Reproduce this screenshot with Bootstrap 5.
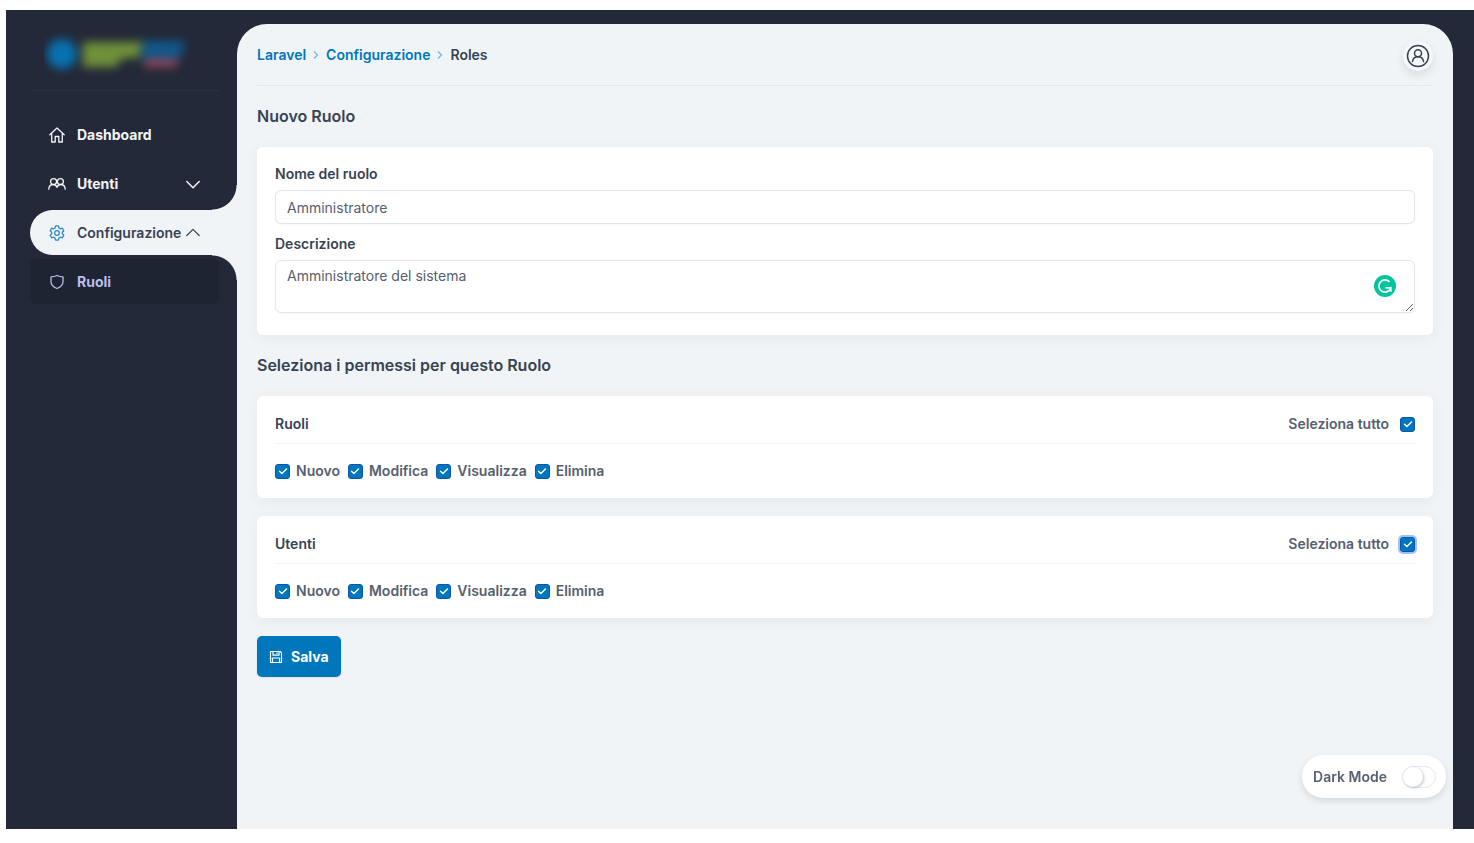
<!DOCTYPE html>
<html lang="it">
<head>
<meta charset="utf-8">
<meta name="viewport" content="width=device-width, initial-scale=1">
<title>Nuovo Ruolo</title>
<link href="https://cdn.jsdelivr.net/npm/bootstrap@5.3.0/dist/css/bootstrap.min.css" rel="stylesheet">
<style>
  :root { --night: #232938; --page: #f0f4f7; --brand: #0077bd; --ink: #374353; --soft: #56606f; }
  body { font-family: Inter, "Liberation Sans", sans-serif; font-size: 14px; line-height: 18px; color: var(--ink); background: #fff; padding: 10px 0 14px 6px; }
  .shell { background: var(--night); min-height: calc(100vh - 24px); padding-right: 21px; }
  .side { width: 231px; padding: 20px 0 20px 24px; }
  .logo { height: 51px; padding: 0 0 0 14px; }
  .side-rule { height: 1px; background: #2a3145; margin: 9px 18px 21px 0; }
  .side-nav { gap: 4px; }
  .side-link { height: 45px; padding: 0 18px; margin-right: 18px; color: #f1f4f8; font-weight: 700; border-radius: 6px; text-decoration: none; display: flex; align-items: center; }
  .side-link .ico { width: 18px; height: 18px; margin-right: 11px; flex: none; }
  .side-link .chev { width: 16px; height: 16px; margin-left: auto; flex: none; }
  .side-link.current { position: relative; margin-right: 0; padding-right: 36px; background: var(--page); color: var(--ink); font-weight: 600; border-radius: 23px 0 0 23px; }
  .side-link.current::before, .side-link.current::after { content: ""; position: absolute; right: 0; width: 25px; height: 25px; pointer-events: none; }
  .side-link.current::before { bottom: 100%; background: radial-gradient(circle at 0 0, transparent 24px, var(--page) 25px); }
  .side-link.current::after { top: 100%; background: radial-gradient(circle at 0 100%, transparent 24px, var(--page) 25px); }
  .side-link.child { background: #1e2431; color: #b8bff0; }
  .stage { margin-top: 14px; padding: 0 20px 24px; background: var(--page); border-radius: 30px 30px 0 0; }
  .topbar { height: 62px; border-bottom: 1px solid #e4e8ec; }
  .breadcrumb { --bs-breadcrumb-divider: ""; font-weight: 600; gap: 6px; }
  .breadcrumb a { color: var(--brand); text-decoration: none; }
  .avatar { width: 30px; height: 30px; padding: 3px; margin-top: 3px; border: 0; border-radius: 50%; background: #f5f7f9; color: var(--ink); box-shadow: 0 4px 8px rgba(40,55,75,.12); }
  h1, h2.section-title { font-size: 16px; line-height: 20px; font-weight: 600; margin: 0; }
  h1 { padding: 20px 0 21px; }
  h2.section-title { padding: 20px 0 21px; }
  .panel { background: #fff; border-radius: 6px; padding: 18px; box-shadow: 0 3px 14px rgba(50,70,100,.06); }
  .panel .form-label { font-weight: 600; margin: 0 0 7px; display: block; }
  .panel .form-control + .form-label { margin-top: 11px; }
  .form-control { font-size: 14px; line-height: 18px; padding: 6px 11px; border-color: #e1e7ef; border-radius: 6px; color: var(--soft); height: 34px; box-shadow: 0 1px 2px rgba(0,0,0,.03); }
  textarea.form-control { height: 53px; min-height: 53px; resize: vertical; }
  .helper { position: absolute; right: 19px; top: 15px; width: 22px; height: 22px; }
  .perms { gap: 18px; }
  .perm-head { border-bottom: 1px solid #f0f2f5; padding-bottom: 9px; line-height: 20px; margin-bottom: 18px; }
  .perm-head h3 { font-size: 14px; line-height: 20px; font-weight: 600; margin: 0; }
  .tick { display: flex; align-items: center; color: var(--soft); font-weight: 600; }
  .tick .form-check-input { width: 15px; height: 15px; margin: 0 6px 0 0; border: 1px solid #0a55ad; border-radius: 3px; background-color: var(--brand); background-size: 12px; background-image: url("data:image/svg+xml,%3Csvg xmlns='http://www.w3.org/2000/svg' viewBox='0 0 12 12'%3E%3Cpath d='M2.5 6.2 4.9 8.4 9.5 3.9' fill='none' stroke='white' stroke-width='1.4' stroke-linecap='round' stroke-linejoin='round'/%3E%3C/svg%3E"); }
  .tick.all .form-check-input { margin: 0 0 0 11px; }
  .tick .form-check-input:focus, .tick .form-check-input.focused { border-color: #0a55ad; box-shadow: 0 0 0 2px #9fc1f5; }
  .btn-save { background: var(--brand); color: #fff; font-size: 14px; line-height: 18px; font-weight: 700; border: 0; border-radius: 5px; height: 41px; padding: 0 12px; box-shadow: 0 1px 2px rgba(0,0,0,.08); }
  .btn-save:hover { background: #0069a8; color: #fff; }
  .dark-toggle { position: fixed; right: 28px; bottom: 45px; height: 43px; padding: 0 10px 0 11px; border-radius: 22px; background: #fff; color: var(--soft); font-weight: 600; box-shadow: 0 3px 6px rgba(40,55,75,.14); }
  .dark-toggle .form-check-input { width: 34px; height: 22px; margin: 0 0 0 15px; padding: 0; border: 1px solid #e5e9f1; border-radius: 11px; background: #fff; appearance: none; position: relative; float: none; }
  .dark-toggle .form-check-input::before { content: ""; position: absolute; left: 0; top: 0; width: 20px; height: 20px; border-radius: 50%; background: #fff; box-shadow: 1px 1px 3px rgba(40,55,75,.3); }
  .dark-toggle .form-check-input:checked::before { left: 12px; }
</style>
</head>
<body>
<div class="shell d-flex">
  <aside class="side flex-shrink-0">
    <div class="logo">
      <svg width="148" height="51" viewBox="0 0 148 51" role="img" aria-label="Logo">
        <defs><filter id="soft" x="-30%" y="-60%" width="160%" height="220%" color-interpolation-filters="sRGB"><feGaussianBlur stdDeviation="5"/></filter></defs>
        <g filter="url(#soft)">
          <circle cx="18" cy="24" r="15" fill="#0871b0"/>
          <path d="M39 12h60l-5 16H78l-6 9H39z" fill="#70913a"/>
          <path d="M100 11h41l-5 17H96z" fill="#10598c"/>
          <path d="M100 29h36l-5 8h-31z" fill="#96465f"/>
        </g>
      </svg>
    </div>
    <div class="side-rule"></div>
    <nav class="side-nav d-flex flex-column" aria-label="Principale">
      <a class="side-link" href="#">
        <svg class="ico" viewBox="0 0 18 18" fill="none" stroke="currentColor" stroke-width="1.3" stroke-linejoin="round" stroke-linecap="round"><path d="M1.800 8.800 9 2l7.200 6.800M3.700 7.200V16h3.500v-5.500h3.600V16h3.500V7.200"/></svg>
        Dashboard</a>
      <a class="side-link" href="#" aria-expanded="false">
        <svg class="ico" viewBox="0 0 18 18" fill="none" stroke="currentColor" stroke-width="1.300" stroke-linecap="round"><circle cx="5.600" cy="6.600" r="3"/><circle cx="12.400" cy="6.600" r="3"/><path d="M.8 14.200c.1-2.700 1.900-4.700 4.700-4.700 2.100 0 3.100 1.500 3.500 3.200.4-1.700 1.400-3.200 3.500-3.200 2.800 0 4.600 2 4.700 4.700"/></svg>
        Utenti
        <svg class="chev" viewBox="0 0 16 16" fill="none" stroke="currentColor" stroke-width="1.500" stroke-linecap="round" stroke-linejoin="round"><path d="m1.800 5.500 6.200 6.200 6.200-6.200"/></svg></a>
      <a class="side-link current" href="#" aria-expanded="true">
        <svg class="ico" viewBox="0 0 18 18" fill="none" stroke="#2f87c6" stroke-width="1.300" stroke-linejoin="round"><circle cx="9" cy="9" r="2.300"/><path d="M7.600 1.900h2.800l.6 2.100 1.300.8 2.100-.6 1.400 2.500L14.300 8.200v1.600l1.500 1.500-1.400 2.500-2.100-.6-1.300.8-.6 2.100H7.600L7 14l-1.300-.8-2.100.6-1.400-2.500 1.500-1.500V8.200L2.200 6.700l1.400-2.500 2.100.6L7 4z"/></svg>
        Configurazione
        <svg class="chev" viewBox="0 0 16 16" fill="none" stroke="currentColor" stroke-width="1.200" stroke-linecap="round" stroke-linejoin="round"><path d="m1.800 10.500 6.200-6.200 6.200 6.200"/></svg></a>
      <a class="side-link child" href="#">
        <svg class="ico" viewBox="0 0 18 18" fill="none" stroke="currentColor" stroke-width="1.300" stroke-linejoin="round"><path d="M9 2.500c2 .9 3.900 1.300 6 1.300v4.700c0 3.300-2.600 5.600-6 7-3.400-1.400-6-3.700-6-7V3.800c2.100 0 4-.4 6-1.300z"/></svg>
        Ruoli</a>
    </nav>
  </aside>

  <main class="stage flex-grow-1">
    <header class="topbar d-flex align-items-center justify-content-between">
      <nav aria-label="Percorso">
        <ol class="breadcrumb m-0 align-items-center">
          <li><a href="#">Laravel</a></li>
          <li aria-hidden="true" class="d-flex"><svg width="8" height="10" viewBox="0 0 8 10" fill="none" stroke="#74b4dc" stroke-width="1.200"><path d="m2 1.500 3.500 3.500L2 8.500"/></svg></li>
          <li><a href="#">Configurazione</a></li>
          <li aria-hidden="true" class="d-flex"><svg width="8" height="10" viewBox="0 0 8 10" fill="none" stroke="#74b4dc" stroke-width="1.200"><path d="m2 1.500 3.500 3.500L2 8.500"/></svg></li>
          <li aria-current="page">Roles</li>
        </ol>
      </nav>
      <button class="avatar d-flex" type="button" aria-label="Profilo">
        <svg width="24" height="24" viewBox="0 0 24 24" fill="none" stroke="currentColor" stroke-width="1.500" stroke-linecap="round"><circle cx="12" cy="12" r="10.500"/><circle cx="12" cy="9.200" r="3.500"/><path d="M6.500 17.500c.4-2.900 2.600-4.800 5.500-4.800s5.100 1.900 5.500 4.800"/></svg>
      </button>
    </header>

    <form>
      <h1>Nuovo Ruolo</h1>
      <section class="panel">
        <label class="form-label" for="nome">Nome del ruolo</label>
        <input class="form-control" id="nome" type="text" value="Amministratore">
        <label class="form-label" for="descrizione">Descrizione</label>
        <div class="position-relative mb-1">
          <textarea class="form-control" id="descrizione" spellcheck="false">Amministratore del sistema</textarea>
          <svg class="helper" viewBox="0 0 22 22" aria-hidden="true"><circle cx="11" cy="11" r="11" fill="#05c39e"/><path d="M15.400 6.800A6.100 6.100 0 1 0 16.600 13.500M11.500 12.800h5.300v4" fill="none" stroke="#fff" stroke-width="1.700"/></svg>
        </div>
      </section>

      <h2 class="section-title">Seleziona i permessi per questo Ruolo</h2>
      <div class="d-grid perms">
        <section class="panel">
          <div class="perm-head d-flex justify-content-between">
            <h3>Ruoli</h3>
            <label class="tick all">Seleziona tutto <input class="form-check-input" type="checkbox" checked></label>
          </div>
          <div class="d-flex flex-wrap gap-2">
            <label class="tick"><input class="form-check-input" type="checkbox" checked>Nuovo</label>
            <label class="tick"><input class="form-check-input" type="checkbox" checked>Modifica</label>
            <label class="tick"><input class="form-check-input" type="checkbox" checked>Visualizza</label>
            <label class="tick"><input class="form-check-input" type="checkbox" checked>Elimina</label>
          </div>
        </section>
        <section class="panel">
          <div class="perm-head d-flex justify-content-between">
            <h3>Utenti</h3>
            <label class="tick all">Seleziona tutto <input class="form-check-input focused" type="checkbox" checked></label>
          </div>
          <div class="d-flex flex-wrap gap-2">
            <label class="tick"><input class="form-check-input" type="checkbox" checked>Nuovo</label>
            <label class="tick"><input class="form-check-input" type="checkbox" checked>Modifica</label>
            <label class="tick"><input class="form-check-input" type="checkbox" checked>Visualizza</label>
            <label class="tick"><input class="form-check-input" type="checkbox" checked>Elimina</label>
          </div>
        </section>
        <div>
          <button class="btn btn-save d-inline-flex align-items-center gap-2" type="button">
            <svg width="14" height="14" viewBox="0 0 14 14" fill="none" stroke="currentColor" stroke-width="1.200" stroke-linejoin="round"><path d="M1.500 1.500h9.700l1.300 1.300v9.700h-11zM4 1.500v3.700h6V1.500M3.500 12.500V8h7v4.500M8 2.500v1.500"/></svg>
            Salva</button>
        </div>
      </div>
    </form>
  </main>
</div>
<label class="dark-toggle d-flex align-items-center">Dark Mode <input class="form-check-input" type="checkbox" role="switch"></label>
<script src="https://cdn.jsdelivr.net/npm/bootstrap@5.3.0/dist/js/bootstrap.bundle.min.js"></script>
</body>
</html>
